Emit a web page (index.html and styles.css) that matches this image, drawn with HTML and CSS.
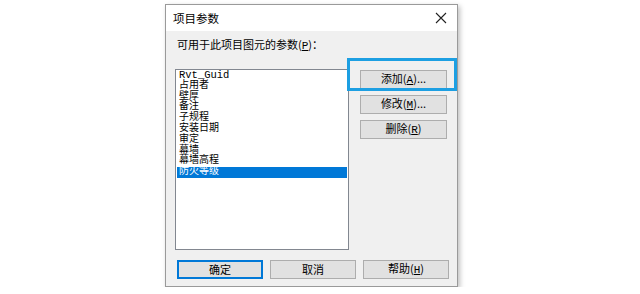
FILE: index.html
```html
<!DOCTYPE html>
<html lang="zh-CN">
<head>
    <meta charset="UTF-8">
    <title>项目参数</title>
    <link rel="stylesheet" href="styles.css">
</head>
<body>

<div class="stage">
    <div class="dialog">
        <div class="titlebar">
            <span class="title">项目参数</span>
            <svg class="close" width="12" height="12" viewBox="0 0 12 12">
                <path d="M1 1 L11 11 M11 1 L1 11" stroke="#222" stroke-width="1.1" fill="none"/>
            </svg>
        </div>

        <div class="content">
            <div class="label">可用于此项目图元的参数(<u>P</u>)：</div>

            <div class="main">
                <ul class="list">
                    <li>Rvt_Guid</li>
                    <li>占用者</li>
                    <li>壁厚</li>
                    <li>备注</li>
                    <li>子规程</li>
                    <li>安装日期</li>
                    <li>审定</li>
                    <li>幕墙</li>
                    <li>幕墙高程</li>
                    <li class="selected">防火等级</li>
                </ul>

                <div class="side">
                    <button class="btn">添加(<u>A</u>)...</button>
                    <button class="btn">修改(<u>M</u>)...</button>
                    <button class="btn">删除(<u>R</u>)</button>
                </div>
            </div>

            <div class="footer">
                <button class="btn wide default">确定</button>
                <button class="btn wide">取消</button>
                <button class="btn wide">帮助(<u>H</u>)</button>
            </div>
        </div>

        <!-- marcador de resaltado sobre el botón -->
        <div class="mark"></div>
    </div>
</div>

</body>
</html>
```

FILE: styles.css
```css
body {
    margin: 0;
    background: #ffffff;
    font-family: "Liberation Mono", "Noto Sans CJK SC", monospace;
    font-size: 11px;
    color: #000;
}
.stage {
    padding: 4px 0 0 165px;
}
.dialog {
    position: relative;
    width: 291px;
    height: 281px;
    border: 1px solid #9a9a9a;
    background: #f0f0f0;
    box-shadow: 2px 2px 5px rgba(0, 0, 0, 0.25);
}
.titlebar {
    height: 26px;
    background: #ffffff;
    display: flex;
    align-items: center;
    justify-content: space-between;
    padding: 0 10px 0 7px;
}
.title {
    font-family: "Noto Sans CJK SC", sans-serif;
    font-size: 11.5px;
}
.content {
    padding: 0 0 0 9px;
}
.label {
    margin: 6px 0 0 2px;
    line-height: 14px;
    font-family: "Noto Sans CJK SC", sans-serif;
}
.label u, .btn u {
    font-family: "Liberation Mono", monospace;
}
.main {
    display: flex;
    margin-top: 16px;
}
.list {
    list-style: none;
    margin: 0;
    padding: 0 1px;
    width: 170px;
    height: 179px;
    border: 1px solid #828790;
    background: #ffffff;
    box-sizing: content-box;
    font-size: 10px;
}
.list li {
    height: 10.8px;
    line-height: 10.8px;
    padding-left: 2px;
    white-space: nowrap;
}
.list li:first-child {
    font-size: 10.5px;
}
.list li.selected {
    background: #0078d7;
    color: #ffffff;
}
.side {
    display: flex;
    flex-direction: column;
    gap: 6px;
    margin: 1px 0 0 11px;
}
.btn {
    width: 87px;
    height: 19px;
    padding: 0;
    border: 1px solid #adadad;
    background: #e1e1e1;
    font-family: "Noto Sans CJK SC", sans-serif;
    font-size: 11px;
    color: #000;
    line-height: 15px;
}
.footer {
    display: flex;
    gap: 7px;
    margin: 10px 0 0 2px;
}
.btn.wide {
    width: 86px;
}
.btn.default {
    border: 2px solid #0078d7;
}
.mark {
    position: absolute;
    left: 181px;
    top: 53px;
    width: 104px;
    height: 27px;
    border: 3px solid #1d9fe2;
}
```
